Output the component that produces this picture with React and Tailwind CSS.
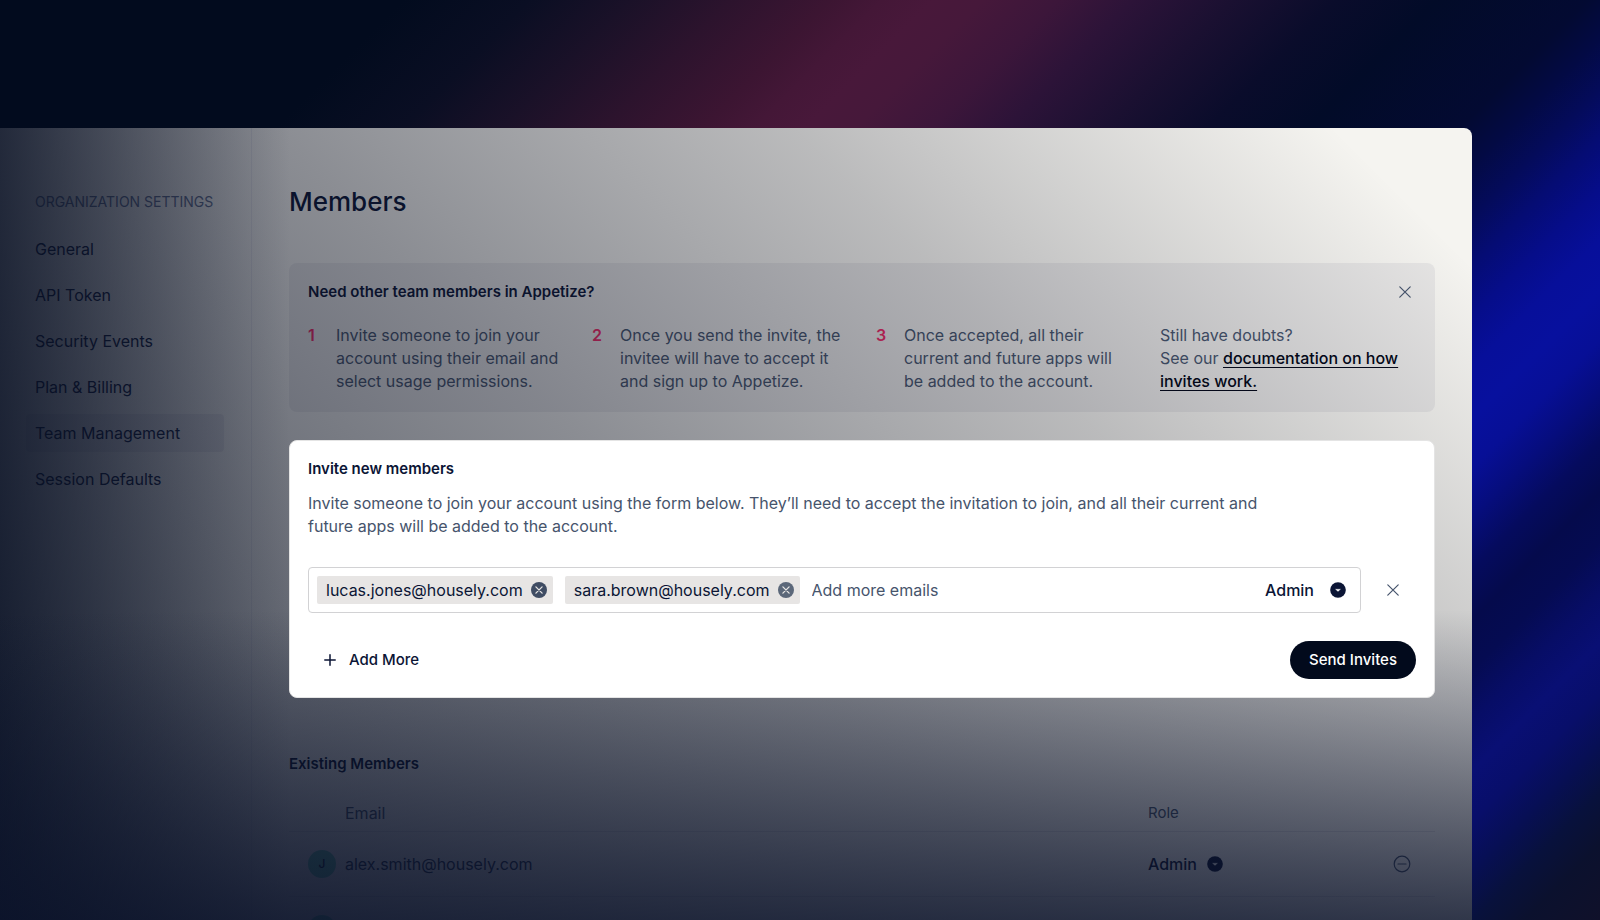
const NAV_ITEMS = [
  "General",
  "API Token",
  "Security Events",
  "Plan & Billing",
  "Team Management",
  "Session Defaults",
];

const STEPS = [
  "Invite someone to join your account using their email and select usage permissions.",
  "Once you send the invite, the invitee will have to accept it and sign up to Appetize.",
  "Once accepted, all their current and future apps will be added to the account.",
];

const INVITEES = [
  { email: "lucas.jones@housely.com", icon: "text-[#3f4c63]" },
  { email: "sara.brown@housely.com", icon: "text-[#5b6779]" },
];

function CrossIcon() {
  return (
    <svg viewBox="0 0 12 12" className="size-3" fill="none" stroke="currentColor" strokeWidth="1.2" strokeLinecap="round" aria-hidden="true">
      <path d="M0.8 0.8 11.2 11.2M11.2 0.8 0.8 11.2" />
    </svg>
  );
}

function RemoveIcon() {
  return (
    <svg viewBox="0 0 16 16" className="size-4" aria-hidden="true">
      <circle cx="8" cy="8" r="8" fill="currentColor" />
      <path d="M4.9 4.9 11.1 11.1M11.1 4.9 4.9 11.1" stroke="#e7e5e4" strokeWidth="1.3" strokeLinecap="round" />
    </svg>
  );
}

function CaretIcon() {
  return (
    <svg viewBox="0 0 16 16" className="size-4" aria-hidden="true">
      <circle cx="8" cy="8" r="7.8" fill="#0b1535" />
      <path d="M5.5 7.2h5L8 9.4Z" fill="#fff" stroke="#fff" strokeWidth="0.3" strokeLinejoin="round" />
    </svg>
  );
}

function MinusCircleIcon() {
  return (
    <svg viewBox="0 0 18 18" className="size-[18px]" fill="none" stroke="currentColor" strokeWidth="1.2" strokeLinecap="round" aria-hidden="true">
      <circle cx="9" cy="9" r="7.8" />
      <path d="M5 9h8" />
    </svg>
  );
}

function PlusIcon() {
  return (
    <svg viewBox="0 0 12 12" className="size-3" fill="none" stroke="currentColor" strokeWidth="1.5" strokeLinecap="round" aria-hidden="true">
      <path d="M6 0.8V11.2M0.8 6H11.2" />
    </svg>
  );
}

function RoleSelect({ label, wide }) {
  return (
    <span className="relative inline-flex items-center">
      <select
        aria-label={label}
        defaultValue="Admin"
        className={
          "field-sizing-content appearance-none bg-transparent text-[16px] leading-5 font-medium text-[#0b1535] outline-none " +
          (wide ? "pr-8" : "pr-[26px]")
        }
      >
        <option>Admin</option>
      </select>
      <span className="pointer-events-none absolute right-0">
        <CaretIcon />
      </span>
    </span>
  );
}

function Sidebar() {
  return (
    <aside className="w-[252px] shrink-0 border-r border-[#e6e5e8] pt-16 pr-[27px] pl-[26px]">
      <h2 className="pl-[9px] text-[14px] leading-5 text-[#64708f]">ORGANIZATION SETTINGS</h2>
      <nav className="mt-[18px] flex flex-col gap-2">
        {NAV_ITEMS.map((item) => (
          <a
            key={item}
            href="#"
            className={
              "flex h-[38px] items-center rounded-sm pl-[9px] text-[16px] text-[#182444] " +
              (item === "Team Management" ? "bg-[#e5e4e5]" : "")
            }
          >
            {item}
          </a>
        ))}
      </nav>
    </aside>
  );
}

function HelpBox() {
  return (
    <section className="rounded-lg bg-[#e7e6e5] p-[19px]">
      <div className="flex items-center justify-between">
        <h2 className="text-[15px] leading-5 font-semibold text-[#0b1535]">Need other team members in Appetize?</h2>
        <button type="button" aria-label="Dismiss" className="mr-[5px] text-[#46546c]">
          <CrossIcon />
        </button>
      </div>
      <div className="mt-[22px] grid grid-cols-4 gap-x-7 text-[16px] leading-[23px] text-[#46546c]">
        {STEPS.map((step, i) => (
          <div key={step} className="flex">
            <span className="w-7 shrink-0 font-semibold text-[#ee2a66]">{i + 1}</span>
            <p>{step}</p>
          </div>
        ))}
        <p>
          Still have doubts?
          <br />
          See our{" "}
          <a href="#" className="font-medium text-[#020617] underline underline-offset-3">
            documentation on how invites work.
          </a>
        </p>
      </div>
    </section>
  );
}

function InviteCard() {
  return (
    <section className="relative z-20 mt-7 rounded-lg border border-[#e4e4e4] bg-white p-[18px]">
      <h2 className="text-[15px] leading-5 font-semibold text-[#0b1535]">Invite new members</h2>
      <p className="mt-[13px] max-w-[970px] text-[16px] leading-[23px] text-[#46546c]">
        Invite someone to join your account using the form below. They’ll need to accept the invitation to join, and all
        their current and future apps will be added to the account.
      </p>
      <div className="mt-[29px] flex items-center">
        <div className="flex h-[46px] min-w-0 flex-1 items-center rounded border border-[#d2d2d4] pr-[14px] pl-2">
          <ul className="flex gap-3">
            {INVITEES.map(({ email, icon }) => (
              <li key={email} className="flex h-7 items-center gap-2 rounded-xs bg-[#e7e5e4] pr-[6px] pl-[9px] text-[16px] text-[#0b1535]">
                {email}
                <button type="button" aria-label={"Remove " + email} className={icon}>
                  <RemoveIcon />
                </button>
              </li>
            ))}
          </ul>
          <input
            type="email"
            aria-label="Add more emails"
            placeholder="Add more emails"
            className="ml-3 min-w-0 flex-1 bg-transparent text-[16px] text-[#46546c] outline-none placeholder:text-[#46546c]"
          />
          <RoleSelect label="Role for new members" wide />
        </div>
        <button type="button" aria-label="Remove row" className="mr-[17px] ml-[26px] text-[#46546c]">
          <CrossIcon />
        </button>
      </div>
      <div className="mt-7 flex items-center justify-between">
        <button type="button" className="flex h-[38px] items-center gap-[13px] pl-4 text-[15px] font-medium text-[#0b1535]">
          <PlusIcon />
          Add More
        </button>
        <button type="button" className="h-[38px] rounded-full bg-[#020a1c] px-[19px] text-[15px] font-medium text-white">
          Send Invites
        </button>
      </div>
    </section>
  );
}

function MembersTable() {
  return (
    <section className="mt-14">
      <h2 className="text-[15px] leading-5 font-semibold text-[#0b1535]">Existing Members</h2>
      <table className="mt-[21px] w-full table-fixed border-collapse text-left text-[16px]">
        <thead>
          <tr className="h-9 border-b border-[#dfdee0] text-[#46546c]">
            <th className="w-14" aria-label="Avatar" />
            <th className="font-normal">Email</th>
            <th className="w-[220px] text-[15px] font-normal">Role</th>
            <th className="w-[67px]" aria-label="Actions" />
          </tr>
        </thead>
        <tbody>
          <tr className="h-[65px] border-b border-[#dfdee0]">
            <td>
              <span className="ml-[19px] flex size-7 items-center justify-center rounded-full bg-[#6fd0b4] text-[12px] font-medium text-[#0b1535]">
                J
              </span>
            </td>
            <td className="text-[#26334f]">alex.smith@housely.com</td>
            <td>
              <RoleSelect label="Role of alex.smith@housely.com" />
            </td>
            <td>
              <button type="button" aria-label="Remove member" className="ml-[25px] block text-[#46546c]">
                <MinusCircleIcon />
              </button>
            </td>
          </tr>
          <tr className="h-[65px]">
            <td>
              <span className="ml-[19px] block size-7 rounded-full bg-[#6fd0b4]" />
            </td>
            <td />
            <td />
            <td />
          </tr>
        </tbody>
      </table>
    </section>
  );
}

export default function App() {
  return (
    <div className="flex h-screen flex-col overflow-hidden bg-[#020b1e] bg-[linear-gradient(135deg,#020b1e_0%,#020b1e_16%,#0a0e23_21%,#1a1128_25%,#2c132d_29%,#3c1532_33%,#441737_35%,#48183a_37%,#46183a_39%,#3c163a_42%,#2c1338_45%,#1a1031_49%,#0a0c2b_53%,#020b28_57%,#030a32_63%,#030a44_65%,#040b5a_67%,#050c74_69%,#060d8a_71%,#070f9a_73%,#07109e_75%,#070f96_77%,#060d7c_79%,#050b5e_81%,#050a4c_83%,#050b52_85%,#070d66_87%,#090f74_89%,#080e6a_91%,#070f54_93%,#08113c_95%,#0b112e_97%,#10112a_100%)] pt-32 pr-32 font-[Inter,'Liberation_Sans',sans-serif]">
      <div className="relative flex min-h-0 flex-1 overflow-hidden rounded-tr-lg bg-[#f5f4f0]">
        <Sidebar />
        <main className="min-w-0 flex-1 px-[37px] pt-14">
          <h1 className="mb-[43px] text-[26px] leading-9 font-medium text-[#0b1535]">Members</h1>
          <HelpBox />
          <InviteCard />
          <MembersTable />
        </main>
        <div className="pointer-events-none absolute inset-0 z-10 bg-[linear-gradient(225deg,rgba(12,16,32,0)_6%,rgba(12,16,32,0.25)_30%,rgba(10,16,34,0.45)_53%,rgba(6,14,34,0.8)_100%)]" />
        <div className="pointer-events-none absolute inset-y-0 left-0 z-10 w-[290px] bg-linear-to-r from-[rgba(6,14,34,0.74)] to-[rgba(6,14,34,0)]" />
        <div className="pointer-events-none absolute inset-x-0 bottom-0 z-10 h-[310px] bg-linear-to-t from-[rgba(10,18,42,0.77)] to-[rgba(10,18,42,0)]" />
      </div>
    </div>
  );
}
